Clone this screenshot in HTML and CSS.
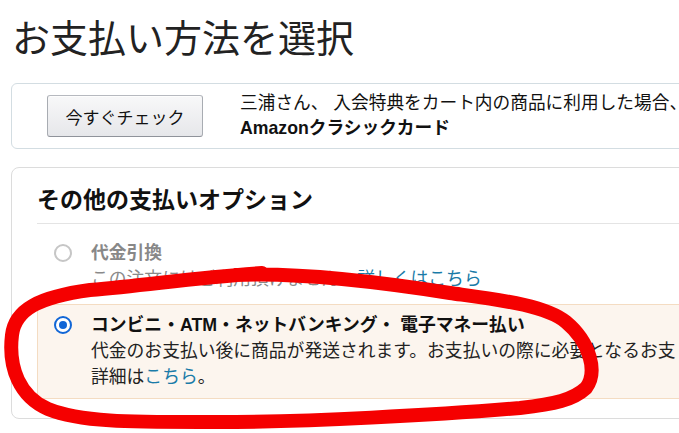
FILE: index.html
```html
<!DOCTYPE html>
<html lang="ja">
<head>
<meta charset="utf-8">
<link rel="stylesheet" href="styles.css">
</head>
<body>
<div class="page">
  <h1 class="title">お支払い方法を選択</h1>

  <div class="promo">
    <button class="btn">今すぐチェック</button>
    <div class="promo-text">
      <div>三浦さん、 入会特典をカート内の商品に利用した場合、</div>
      <div class="bold">Amazonクラシックカード</div>
    </div>
  </div>

  <div class="panel">
    <h2 class="panel-title">その他の支払いオプション</h2>
    <div class="divider"></div>

    <div class="option disabled">
      <span class="radio"></span>
      <div class="option-body">
        <div class="option-name">代金引換</div>
        <div class="option-desc">この注文にはご利用頂けません。<a class="link">詳しくはこちら</a></div>
      </div>
    </div>

    <div class="option selected">
      <span class="radio on"></span>
      <div class="option-body">
        <div class="option-name">コンビニ・ATM・ネットバンキング・ 電子マネー払い</div>
        <div class="option-text">代金のお支払い後に商品が発送されます。お支払いの際に必要となるお支</div>
        <div class="option-text">詳細は<a class="link">こちら</a>。</div>
      </div>
    </div>
  </div>
</div>

<svg class="scribble" width="679" height="433" viewBox="0 0 679 433">
  <path d="M 235 275 C 300 272, 380 282, 450 293 C 500 300, 545 305, 566 322 C 590 342, 598 372, 586 388 C 573 400, 555 404, 520 408 C 450 414, 300 423, 200 422 C 130 422, 80 422, 48 409 C 20 397, 8 368, 12 335 C 15 310, 38 297, 90 290 C 150 285, 190 278, 262 273" fill="none" stroke="#f50000" stroke-width="14" stroke-linecap="round" stroke-linejoin="round"/>
</svg>
</body>
</html>
```

FILE: styles.css
```css
html, body {
  margin: 0;
  padding: 0;
  background: #fff;
}

body {
  width: 679px;
  height: 433px;
  overflow: hidden;
  position: relative;
  font-family: "Liberation Sans", "Noto Sans CJK JP", sans-serif;
  color: #111;
}

.page {
  width: 800px;
  padding-left: 11px;
}

.title {
  margin: 17px 0 0 1px;
  font-size: 38px;
  line-height: 44px;
  font-weight: 400;
  color: #222;
}

.promo {
  margin-top: 22px;
  height: 64px;
  border: 1px solid #d3dde2;
  border-radius: 6px;
  display: flex;
  align-items: center;
  padding-left: 35px;
  gap: 37px;
}

.btn {
  width: 156px;
  height: 42px;
  font-family: inherit;
  font-size: 17px;
  color: #111;
  background: linear-gradient(#f8f8f9, #e6e7ea);
  border: 1px solid #adb1b8;
  border-color: #b6b9bf #a8acb2 #8f939a;
  border-radius: 3px;
  box-shadow: inset 0 1px 0 rgba(255,255,255,.7);
  padding: 0;
}

.promo-text {
  font-size: 17.7px;
  line-height: 25px;
  color: #111;
  white-space: nowrap;
}

.bold {
  font-weight: 700;
}

.panel {
  margin-top: 18px;
  border: 1px solid #dcdcdc;
  border-radius: 8px;
  padding: 17px 0 19px 25px;
}

.panel-title {
  margin: 0;
  font-size: 23px;
  line-height: 30px;
  font-weight: 700;
  color: #111;
}

.divider {
  margin-top: 8px;
  border-top: 1px solid #e4e4e4;
}

.option {
  margin-top: 8px;
  display: flex;
  align-items: flex-start;
  gap: 19px;
  border: 1px solid transparent;
  padding: 7px 17px 8px 16px;
  font-size: 17.8px;
  line-height: 26px;
}

.option.selected {
  margin-top: 3px;
  background: #fcf5ee;
  border-color: #f4dcc2;
}

.radio {
  flex: none;
  width: 18px;
  height: 18px;
  margin-top: 4px;
  box-sizing: border-box;
  border-radius: 50%;
  border: 2px solid #c6c6c6;
  background: #fff;
  position: relative;
}

.radio.on {
  border-color: #1166d6;
}

.radio.on::after {
  content: "";
  position: absolute;
  left: 3px;
  top: 3px;
  width: 8px;
  height: 8px;
  border-radius: 50%;
  background: #1166d6;
}

.option-body {
  white-space: nowrap;
}

.option-name {
  font-weight: 700;
  color: #111;
}

.disabled .option-name {
  color: #888;
}

.option-desc {
  color: #8a8a8a;
}

.option-text {
  color: #222;
}

.link {
  color: #1a7ba8;
  text-decoration: none;
}

.scribble {
  position: absolute;
  left: 0;
  top: 0;
  pointer-events: none;
}
```
